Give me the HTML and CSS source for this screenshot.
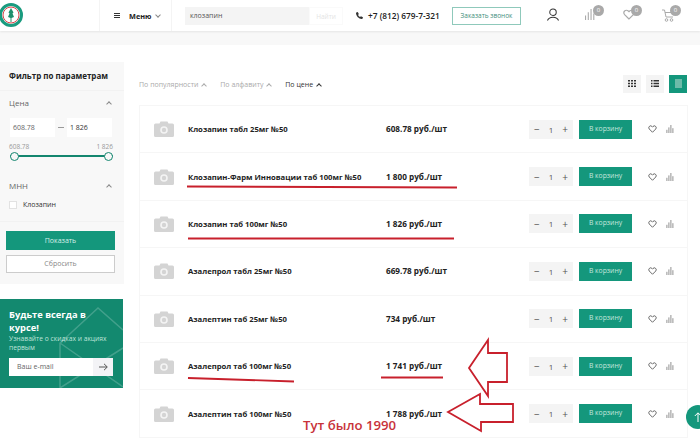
FILE: index.html
```html
<!DOCTYPE html>
<html>
<head>
    <title>Клозапин</title>
    <link rel="stylesheet" href="styles.css">
</head>
<body>
    <svg class="icon-defs" width="0" height="0">
        <symbol id="i-camera" viewBox="0 0 20 16">
            <path fill="#d4d4d4" d="M1.500 2.500h4l1-2h7l1 2h4a1.500 1.500 0 0 1 1.500 1.500v10.500a1.500 1.500 0 0 1-1.500 1.500h-17a1.500 1.500 0 0 1-1.500-1.500v-10.500a1.500 1.500 0 0 1 1.500-1.500z"/>
            <circle cx="10" cy="9" r="3.800" fill="#f4f4f4"/>
            <circle cx="10" cy="9" r="2.200" fill="#d4d4d4"/>
        </symbol>
        <symbol id="i-heart" viewBox="0 0 12 11">
            <path fill="none" stroke="currentColor" stroke-width="1.200" d="M6 10L1.600 5.600a2.700 2.700 0 0 1 0-3.600 2.600 2.600 0 0 1 3.700 0l.7.700.7-.7a2.600 2.600 0 0 1 3.700 0 2.700 2.700 0 0 1 0 3.600z"/>
        </symbol>
        <symbol id="i-stats" viewBox="0 0 10 10">
            <path fill="none" stroke="currentColor" stroke-width="1" d="M.5 10V6M3 10V3M5.500 10V0M8 10V4"/>
        </symbol>
    </svg>

    <header class="topbar">
        <div class="logo-box">
            <svg class="logo" width="24" height="24" viewBox="0 0 24 24">
                <circle cx="12" cy="12" r="10.500" fill="#fff" stroke="#1a9b7f" stroke-width="3"/>
                <circle cx="12" cy="12" r="8" fill="none" stroke="#d8434a" stroke-width="1"/>
                <path fill="#1f8f6c" d="M12 5l2.500 4.500-1 1 1.500 3.500-2.500 1v4h-1v-4l-2.500-1 1.500-3.500-1-1z"/>
            </svg>
        </div>
        <div class="menu-box">
            <span class="burger"><i></i><i></i><i></i></span>
            <b>Меню</b>
            <span class="caret-down"></span>
        </div>
        <div class="search">
            <span class="search-input">клозапин</span>
            <span class="search-btn">Найти</span>
        </div>
        <div class="phone">
            <svg width="7" height="7" viewBox="0 0 10 10"><path fill="#333" d="M2.500 0L4 3 3 4.200c.6 1.300 1.500 2.200 2.800 2.800L7 6l3 1.500-.8 2c-.2.400-.6.500-1 .5C4 9.700.3 6 0 1.800c0-.4.100-.8.500-1z"/></svg>
            <b>+7 (812) 679-7-321</b>
        </div>
        <a class="call-btn">Заказать звонок</a>
        <div class="top-icons">
            <svg class="user-icon" width="12" height="13" viewBox="0 0 13 14"><circle cx="6.500" cy="4.500" r="3.500" fill="none" stroke="#333" stroke-width="1.100"/><path fill="none" stroke="#333" stroke-width="1.100" d="M.5 13.500c1-2.500 3-3.500 6-3.500s5 1 6 3.500"/></svg>
            <span class="top-icon stats-top">
                <svg width="11" height="11"><use href="#i-stats"/></svg>
                <em>0</em>
            </span>
            <span class="top-icon heart-top">
                <svg width="12" height="11"><use href="#i-heart"/></svg>
                <em>0</em>
            </span>
            <span class="top-icon cart-top">
                <svg width="13" height="13" viewBox="0 0 13 13"><path fill="none" stroke="currentColor" d="M0 1h2.500l1.500 7h7"/><path fill="none" stroke="currentColor" d="M3 3.500h7"/><circle cx="4.500" cy="11" r="1.300" fill="none" stroke="currentColor"/><circle cx="9.500" cy="11" r="1.300" fill="none" stroke="currentColor"/></svg>
                <em>0</em>
            </span>
        </div>
    </header>
    <div class="band"></div>

    <div class="layout">
        <aside class="side">
            <form class="filter">
                <h3 class="filter-title">Фильтр по параметрам</h3>
                <div class="filter-block">
                    <div class="filter-head">Цена <span class="caret-up"></span></div>
                    <div class="price-inputs">
                        <span class="price-input">608.78</span>
                        <span class="dash"></span>
                        <span class="price-input price-to">1 826</span>
                    </div>
                    <div class="range-labels"><span>608.78</span><span>1 826</span></div>
                    <div class="range"><i></i><i></i></div>
                </div>
                <div class="filter-block mnn">
                    <div class="filter-head">МНН <span class="caret-up"></span></div>
                    <label class="check"><span class="box"></span>Клозапин</label>
                </div>
                <div class="filter-actions">
                    <a class="show-btn">Показать</a>
                    <a class="reset-btn">Сбросить</a>
                </div>
            </form>

            <div class="promo">
                <svg class="promo-bg" width="123" height="90" viewBox="0 0 123 90">
                    <path fill="none" stroke="#fff" stroke-opacity=".2" stroke-width="1.500" d="M123 31L98 9 60 44v45L123 49M60 44l63 44"/>
                </svg>
                <h4>Будьте всегда в курсе!</h4>
                <p>Узнавайте о скидках и акциях первым</p>
                <div class="subscribe">
                    <span class="subscribe-input">Ваш e-mail</span>
                    <span class="subscribe-btn">
                        <svg width="9" height="8" viewBox="0 0 9 8"><path fill="none" stroke="#555" d="M0 4h8M5 .8L8.300 4 5 7.200"/></svg>
                    </span>
                </div>
            </div>
        </aside>

        <main class="content">
            <div class="toolbar">
                <div class="sort">
                    <span>По популярности <span class="caret-up"></span></span>
                    <span>По алфавиту <span class="caret-up"></span></span>
                    <span class="sort-active">По цене <span class="caret-up"></span></span>
                </div>
                <div class="views">
                    <span class="view">
                        <svg width="8" height="7" viewBox="0 0 8 7"><path fill="#333" d="M0 0h2v1.500H0zM3 0h2v1.500H3zM6 0h2v1.500H6zM0 2.700h2v1.500H0zM3 2.700h2v1.500H3zM6 2.700h2v1.500H6zM0 5.400h2V7H0zM3 5.400h2V7H3zM6 5.400h2V7H6z"/></svg>
                    </span>
                    <span class="view">
                        <svg width="8" height="7" viewBox="0 0 8 7"><path fill="#333" d="M0 0h1.500v1.500H0zM2.500 0H8v1.500H2.500zM0 2.700h1.500v1.500H0zM2.500 2.700H8v1.500H2.500zM0 5.400h1.500V7H0zM2.500 5.400H8V7H2.500z"/></svg>
                    </span>
                    <span class="view view-active"><i></i></span>
                </div>
            </div>

            <div class="rows">
                <div class="row">
                    <svg class="photo" width="20" height="16"><use href="#i-camera"/></svg>
                    <span class="name">Клозапин табл 25мг №50</span>
                    <span class="price">608.78 руб./шт</span>
                    <span class="qty"><span>−</span><span class="num">1</span><span>+</span></span>
                    <a class="buy">В корзину</a>
                    <svg class="heart" width="9" height="8"><use href="#i-heart"/></svg>
                    <svg class="stats" width="9" height="8"><use href="#i-stats"/></svg>
                </div>
                <div class="row">
                    <svg class="photo" width="20" height="16"><use href="#i-camera"/></svg>
                    <span class="name">Клозапин-Фарм Инновации таб 100мг №50</span>
                    <span class="price">1 800 руб./шт</span>
                    <span class="qty"><span>−</span><span class="num">1</span><span>+</span></span>
                    <a class="buy">В корзину</a>
                    <svg class="heart" width="9" height="8"><use href="#i-heart"/></svg>
                    <svg class="stats" width="9" height="8"><use href="#i-stats"/></svg>
                </div>
                <div class="row">
                    <svg class="photo" width="20" height="16"><use href="#i-camera"/></svg>
                    <span class="name">Клозапин таб 100мг №50</span>
                    <span class="price">1 826 руб./шт</span>
                    <span class="qty"><span>−</span><span class="num">1</span><span>+</span></span>
                    <a class="buy">В корзину</a>
                    <svg class="heart" width="9" height="8"><use href="#i-heart"/></svg>
                    <svg class="stats" width="9" height="8"><use href="#i-stats"/></svg>
                </div>
                <div class="row">
                    <svg class="photo" width="20" height="16"><use href="#i-camera"/></svg>
                    <span class="name">Азалепрол табл 25мг №50</span>
                    <span class="price">669.78 руб./шт</span>
                    <span class="qty"><span>−</span><span class="num">1</span><span>+</span></span>
                    <a class="buy">В корзину</a>
                    <svg class="heart" width="9" height="8"><use href="#i-heart"/></svg>
                    <svg class="stats" width="9" height="8"><use href="#i-stats"/></svg>
                </div>
                <div class="row">
                    <svg class="photo" width="20" height="16"><use href="#i-camera"/></svg>
                    <span class="name">Азалептин таб 25мг №50</span>
                    <span class="price">734 руб./шт</span>
                    <span class="qty"><span>−</span><span class="num">1</span><span>+</span></span>
                    <a class="buy">В корзину</a>
                    <svg class="heart" width="9" height="8"><use href="#i-heart"/></svg>
                    <svg class="stats" width="9" height="8"><use href="#i-stats"/></svg>
                </div>
                <div class="row">
                    <svg class="photo" width="20" height="16"><use href="#i-camera"/></svg>
                    <span class="name">Азалепрол таб 100мг №50</span>
                    <span class="price">1 741 руб./шт</span>
                    <span class="qty"><span>−</span><span class="num">1</span><span>+</span></span>
                    <a class="buy">В корзину</a>
                    <svg class="heart" width="9" height="8"><use href="#i-heart"/></svg>
                    <svg class="stats" width="9" height="8"><use href="#i-stats"/></svg>
                </div>
                <div class="row">
                    <svg class="photo" width="20" height="16"><use href="#i-camera"/></svg>
                    <span class="name">Азалептин таб 100мг №50</span>
                    <span class="price">1 788 руб./шт</span>
                    <span class="qty"><span>−</span><span class="num">1</span><span>+</span></span>
                    <a class="buy">В корзину</a>
                    <svg class="heart" width="9" height="8"><use href="#i-heart"/></svg>
                    <svg class="stats" width="9" height="8"><use href="#i-stats"/></svg>
                </div>
            </div>
        </main>
    </div>

    <a class="to-top">
        <svg width="8" height="10" viewBox="0 0 8 10"><path fill="none" stroke="#fff" d="M4 10V1M.8 4L4 .8 7.200 4"/></svg>
    </a>

    <!-- red marks drawn over the screenshot -->
    <svg class="marks" width="700" height="439" viewBox="0 0 700 439">
        <g fill="none" stroke="#c8202c" stroke-width="1.800">
            <path d="M187 186.500L325 187 457 187.500"/>
            <path d="M188 238.500H454"/>
            <path d="M188 378L294 381.500"/>
            <path d="M381 377.500H443"/>
            <path d="M469 368L488 340V353H507V382H488V396z"/>
            <path d="M448 412L480 394V404H513V422H481V431z"/>
        </g>
    </svg>
    <div class="mark-note">Тут было 1990</div>
</body>
</html>
```

FILE: styles.css
```css
html, body {
    margin: 0;
    padding: 0;
    height: 439px;
    overflow: hidden;
}
body {
    position: relative;
    font-family: "Open Sans", Arial, sans-serif;
    font-size: 9px;
    color: #222;
    background-color: #fff;
}
a {
    display: block;
    text-align: center;
}
.icon-defs {
    position: absolute;
}

/* top bar */
.topbar {
    display: flex;
    align-items: center;
    height: 31px;
    background-color: #fff;
    box-shadow: 0 1px 2px rgba(0, 0, 0, 0.08);
    position: relative;
}
.logo-box {
    width: 100px;
    height: 31px;
    padding-top: 3px;
    border-right: 1px solid #f4f4f4;
    box-sizing: border-box;
    overflow: hidden;
}
.logo {
    margin: 0 0 0 -1px;
    display: block;
}
.menu-box {
    width: 72px;
    height: 31px;
    box-sizing: border-box;
    border-right: 1px solid #f4f4f4;
    display: flex;
    align-items: center;
    padding-left: 14px;
    font-size: 7.300px;
    color: #222;
}
.burger {
    display: flex;
    flex-direction: column;
    gap: 1px;
    width: 6px;
    margin-right: 9px;
}
.burger i {
    display: block;
    height: 1px;
    background-color: #333;
}
.caret-down, .caret-up {
    display: inline-block;
    width: 3px;
    height: 3px;
    border-left: 1px solid #888;
    border-top: 1px solid #888;
}
.caret-down {
    transform: rotate(225deg);
    margin: -2px 0 0 5px;
}
.caret-up {
    transform: rotate(45deg);
    margin-left: 2px;
    position: relative;
    top: 1px;
}
.search {
    display: flex;
    margin-left: 13px;
    height: 18px;
    width: 158px;
}
.search-input {
    width: 124px;
    background-color: #f4f4f4;
    padding-left: 5px;
    box-sizing: border-box;
    line-height: 18px;
    font-size: 7px;
    color: #555;
}
.search-btn {
    flex: 1;
    text-align: center;
    line-height: 18px;
    font-size: 6.500px;
    color: #e4e4e4;
    border: 1px solid #fafafa;
    box-sizing: border-box;
}
.phone {
    display: flex;
    align-items: center;
    gap: 5px;
    margin-left: 13px;
    width: 96px;
    font-size: 8.300px;
    white-space: nowrap;
}
.phone b {
    font-weight: 600;
}
.call-btn {
    width: 69px;
    height: 18px;
    box-sizing: border-box;
    border: 1px solid #8fc9bb;
    line-height: 16px;
    font-size: 6.500px;
    color: #3f8f7d;
}
.top-icons {
    position: relative;
    flex: 1;
    height: 31px;
    color: #aaa;
}
.user-icon {
    position: absolute;
    left: 26px;
    top: 8px;
}
.top-icon {
    position: absolute;
    top: 9px;
    line-height: 0;
}
.top-icon em {
    position: absolute;
    left: 8px;
    top: -4px;
    width: 11px;
    height: 11px;
    border-radius: 50%;
    background-color: #a9a9a9;
    color: #fff;
    font-style: normal;
    font-size: 6px;
    line-height: 11px;
    text-align: center;
}
.stats-top {
    left: 64px;
}
.heart-top {
    left: 102px;
}
.cart-top {
    left: 141px;
}
.band {
    height: 14px;
    background-color: #f8f8f8;
}

/* two columns */
.layout {
    display: flex;
    padding-top: 17px;
}
.side {
    width: 124px;
    flex-shrink: 0;
}
.content {
    width: 549px;
    margin-left: 15px;
}

/* filter */
.filter {
    background-color: #f8f8f8;
    height: 222px;
    box-sizing: border-box;
    padding-top: 7px;
}
.filter-title {
    margin: 0;
    padding: 0 9px 8px;
    font-size: 8px;
    line-height: 13px;
    font-weight: 700;
    white-space: nowrap;
    border-bottom: 1px solid #f2f2f2;
}
.filter-block {
    padding: 0 11px 0 9px;
}
.filter-head {
    display: flex;
    justify-content: space-between;
    align-items: center;
    padding-right: 2px;
    font-size: 8px;
    color: #666;
    margin-top: 5px;
    line-height: 14px;
}
.price-inputs {
    display: flex;
    align-items: center;
    margin-top: 8px;
    padding-left: 1px;
}
.price-input {
    width: 45px;
    height: 19px;
    background-color: #fff;
    padding-left: 3px;
    box-sizing: border-box;
    line-height: 19px;
    font-size: 7px;
    color: #666;
}
.price-to {
    color: #333;
}
.dash {
    width: 6px;
    height: 1px;
    background-color: #999;
    margin: 0 3px;
}
.range-labels {
    display: flex;
    justify-content: space-between;
    margin-top: 5px;
    font-size: 6.500px;
    line-height: 9px;
    color: #999;
}
.range {
    display: flex;
    justify-content: space-between;
    align-items: center;
    height: 2px;
    margin: 4px 0 0 1px;
    background-color: #14866f;
}
.range i {
    display: block;
    width: 9px;
    height: 9px;
    box-sizing: border-box;
    border: 1.500px solid #14866f;
    border-radius: 50%;
    background-color: #f8f8f8;
}
.mnn {
    margin-top: 22px;
    padding-bottom: 12px;
    border-bottom: 1px solid #f2f2f2;
}
.check {
    display: flex;
    align-items: center;
    gap: 6px;
    margin-top: 7px;
    font-size: 7px;
    line-height: 9px;
    color: #333;
}
.box {
    width: 8px;
    height: 8px;
    box-sizing: border-box;
    background-color: #fff;
    border: 1px solid #e2e2e2;
}
.filter-actions {
    padding: 9px 9px 0 6px;
}
.show-btn {
    height: 19px;
    line-height: 19px;
    background-color: #14977c;
    color: #d8efe9;
    font-size: 7px;
}
.reset-btn {
    height: 18px;
    line-height: 16px;
    margin-top: 5px;
    box-sizing: border-box;
    border: 1px solid #ccc;
    background-color: #fff;
    color: #888;
    font-size: 7px;
}

/* promo */
.promo {
    position: relative;
    overflow: hidden;
    margin-top: 15px;
    width: 123px;
    height: 89px;
    box-sizing: border-box;
    padding: 9px 5px 0 9px;
    background-color: #13896f;
    color: #fff;
}
.promo-bg {
    position: absolute;
    left: 0;
    top: 0;
}
.promo h4 {
    position: relative;
    margin: 0;
    width: 90px;
    font-size: 9.300px;
    line-height: 13px;
    font-weight: 700;
}
.promo p {
    position: relative;
    margin: 0;
    font-size: 6.700px;
    line-height: 9px;
    color: #bfe4da;
}
.subscribe {
    position: relative;
    display: flex;
    width: 104px;
    height: 18px;
    margin-top: 6px;
    background-color: #fff;
}
.subscribe-input {
    flex: 1;
    padding-left: 8px;
    line-height: 18px;
    font-size: 7px;
    color: #666;
}
.subscribe-btn {
    width: 20px;
    display: flex;
    align-items: center;
    justify-content: center;
    background-color: #f3f3f6;
}

/* toolbar */
.toolbar {
    display: flex;
    justify-content: space-between;
    align-items: center;
    height: 44px;
    padding-right: 1px;
}
.sort {
    display: flex;
    gap: 14px;
    font-size: 7px;
    color: #aaa;
}
.sort .caret-up {
    border-color: #aaa;
}
.sort-active {
    color: #333;
}
.sort-active .caret-up {
    border-color: #333;
}
.views {
    display: flex;
    gap: 5px;
    margin-top: -1px;
}
.view {
    width: 18px;
    height: 18px;
    display: flex;
    align-items: center;
    justify-content: center;
    background-color: #f4f4f4;
}
.view-active {
    background-color: #14977c;
}
.view-active i {
    display: block;
    width: 7px;
    height: 9px;
    background-color: #6dbba9;
}

/* product rows */
.rows {
    border: 1px solid #f6f6f6;
    border-bottom: none;
    margin-top: -1px;
}
.row {
    display: flex;
    align-items: center;
    height: 47.400px;
    box-sizing: border-box;
    border-bottom: 1px solid #f6f6f6;
    white-space: nowrap;
}
.photo {
    margin-left: 14px;
    flex-shrink: 0;
}
.name {
    width: 198px;
    margin-left: 14px;
    font-size: 7.700px;
    font-weight: 700;
    color: #222;
    white-space: nowrap;
}
.price {
    width: 143px;
    font-size: 8.200px;
    font-weight: 700;
    color: #222;
    margin-top: -1px;
}
.qty {
    display: flex;
    justify-content: space-between;
    align-items: center;
    width: 44px;
    height: 19px;
    box-sizing: border-box;
    padding: 0 5px;
    background-color: #f4f4f4;
    font-size: 10px;
    color: #555;
}
.qty .num {
    font-size: 8px;
}
.buy {
    width: 53px;
    height: 19px;
    margin-left: 6px;
    background-color: #14977c;
    color: #c5e6dd;
    line-height: 18px;
    font-size: 6.800px;
}
.heart {
    margin-left: 16px;
    color: #555;
}
.stats {
    margin-left: 9px;
    color: #777;
}

.to-top {
    position: absolute;
    left: 686px;
    top: 405px;
    width: 24px;
    height: 24px;
    border-radius: 50%;
    background-color: #14977c;
    display: flex;
    align-items: center;
    padding-left: 8px;
    box-sizing: border-box;
}

/* annotations */
.marks {
    position: absolute;
    left: 0;
    top: 0;
    pointer-events: none;
}
.mark-note {
    position: absolute;
    left: 303px;
    top: 416px;
    font-size: 13.200px;
    line-height: 19px;
    font-weight: 600;
    color: #c8323a;
    white-space: nowrap;
}
```
